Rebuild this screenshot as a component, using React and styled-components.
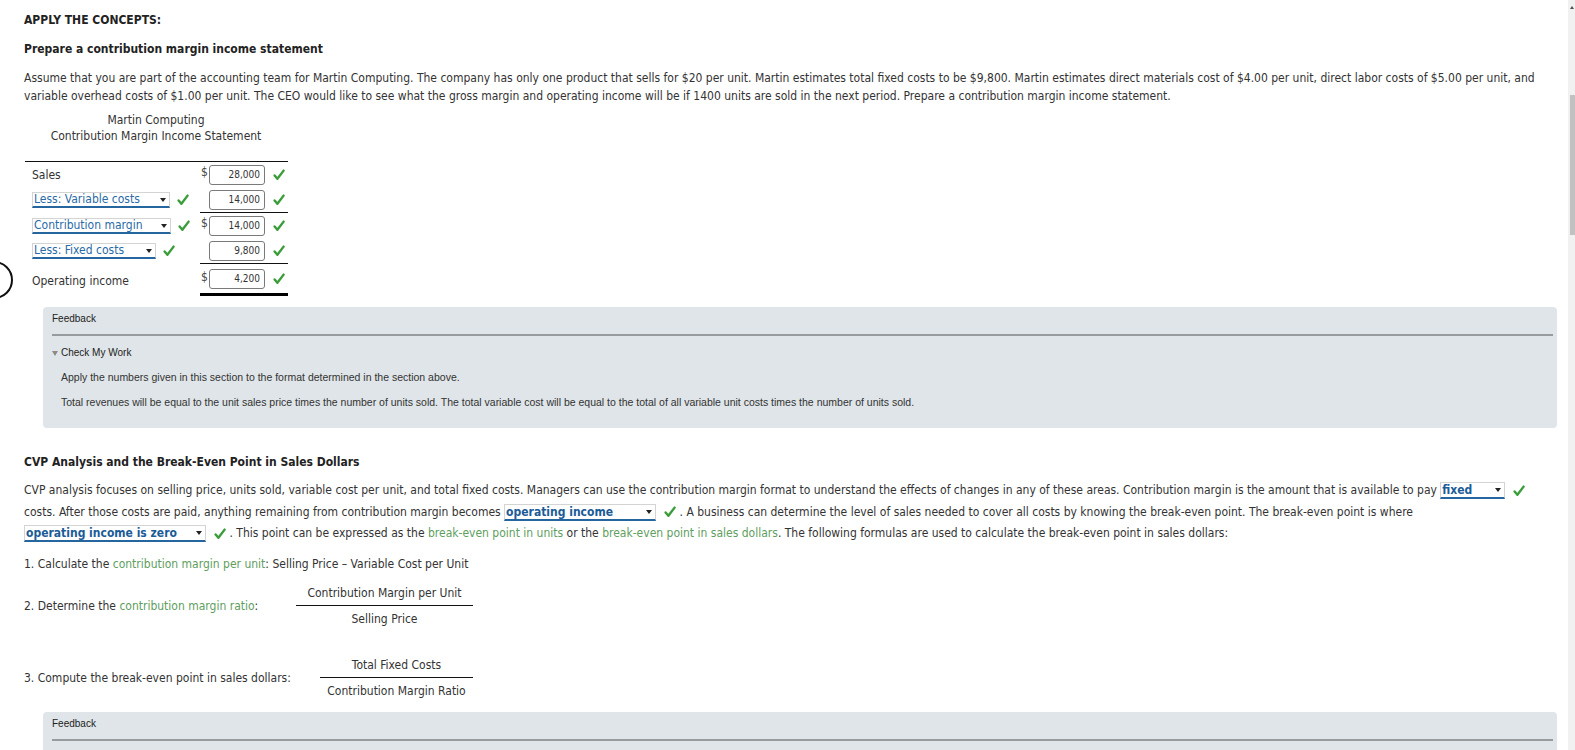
import React from 'react'
import styled, { createGlobalStyle } from 'styled-components'

const GlobalStyle = createGlobalStyle`
  html, body {
    margin: 0;
    padding: 0;
    overflow: hidden;
    background: #fff;
  }
  body {
    font-family: "DejaVu Sans Condensed", "DejaVu Sans", Verdana, sans-serif;
    font-size: 12px;
    color: #333;
  }
`

const Page = styled.div`
  position: relative;
  display: flex;
  height: 750px;
  overflow: hidden;
`

const Main = styled.div`
  flex: 1;
  padding: 11px 11px 0 24px;
  min-width: 0;
`

const Scrollbar = styled.div`
  width: 7px;
  background: #f1f1f1;
  display: flex;
  flex-direction: column;
  align-items: flex-end;
  padding-top: 6px;
`

const ScrollArrow = styled.div`
  width: 0;
  height: 0;
  border-left: 2px solid transparent;
  border-right: 2px solid transparent;
  border-bottom: 3px solid #505050;
  margin-right: 1px;
`

const ScrollThumb = styled.div`
  width: 5px;
  height: 140px;
  margin-top: 86px;
  background: #c1c1c1;
`

const Heading = styled.div`
  font-weight: bold;
  color: #222;
  line-height: 18px;
  margin-top: ${p => p.$mt || 0}px;
`

const Para = styled.p`
  margin: ${p => p.$mt || 0}px 0 0;
  line-height: ${p => p.$lh || 18}px;
  white-space: nowrap;
`

const Term = styled.span`
  color: #5e9e5e;
`

const StatementTitle = styled.div`
  width: 264px;
  margin-top: 7px;
  text-align: center;
  line-height: 16px;
  color: #333;
`

const Table = styled.div`
  width: 263px;
  margin: 17px 0 0 1px;
  border-top: 1px solid #111;
`

const Row = styled.div`
  display: flex;
  align-items: center;
  height: ${p => p.$h || 25}px;
`

const Label = styled.div`
  width: 168px;
  padding-left: 7px;
  display: flex;
  align-items: center;
  padding-top: ${p => p.$pt || 0}px;
`

const AmountCell = styled.div`
  width: 88px;
  align-self: stretch;
  display: flex;
  align-items: center;
  border-bottom: ${p => (p.$rule === 'double' ? '3px solid #000' : p.$rule ? '1px solid #111' : 'none')};
`

const Dollar = styled.span`
  width: 8px;
  font-size: 12px;
  line-height: 14px;
  color: #444;
  align-self: flex-start;
  margin-top: ${p => p.$mt || 3}px;
  padding-left: 1px;
`

const Amount = styled.div`
  box-sizing: border-box;
  width: 56px;
  height: 20px;
  border: 1px solid #7a7a7a;
  border-radius: 3px;
  font-size: 10px;
  line-height: 18px;
  text-align: right;
  padding-right: 4px;
  color: #333;
`

const CheckWrap = styled.span`
  display: inline-flex;
  align-items: center;
  margin-left: ${p => p.$ml || 8}px;
  vertical-align: middle;
`

const Select = styled.span`
  box-sizing: border-box;
  position: relative;
  display: inline-block;
  width: ${p => p.$w}px;
  height: ${p => p.$h || 16}px;
  line-height: ${p => (p.$h || 16) - 3}px;
  border: 1px solid #d4d4d4;
  border-bottom: 2px solid #25669f;
  color: ${p => (p.$bold ? '#1b5c97' : '#2a6aa6')};
  font-weight: ${p => (p.$bold ? 'bold' : 'normal')};
  padding-left: 1px;
  vertical-align: middle;
  white-space: nowrap;
  &::after {
    content: '';
    position: absolute;
    right: 3px;
    top: 5px;
    border-left: 3px solid transparent;
    border-right: 3px solid transparent;
    border-top: 4px solid #222;
  }
`

const Feedback = styled.div`
  margin: ${p => p.$mt || 0}px 0 0 19px;
  background: #dfe5e8;
  border-radius: 4px;
  padding: 5px 4px 0 9px;
  height: ${p => p.$h}px;
  font-family: "Liberation Sans", Arial, sans-serif;
  color: #222;
`

const FeedbackTitle = styled.div`
  font-size: 10px;
  line-height: 14px;
  padding-bottom: 8px;
  border-bottom: 2px solid #979b9e;
`

const CheckWork = styled.div`
  margin-top: 10px;
  font-size: 10px;
  line-height: 14px;
  display: flex;
  align-items: center;
  gap: 3px;
  &::before {
    content: '';
    border-left: 3px solid transparent;
    border-right: 3px solid transparent;
    border-top: 5px solid #8a8a8a;
  }
`

const FeedbackText = styled.p`
  margin: ${p => p.$mt}px 0 0 9px;
  font-size: 10.5px;
  line-height: 14px;
  color: #333;
`

const Step = styled.div`
  display: flex;
  align-items: center;
  justify-content: space-between;
  width: 449px;
  margin-top: ${p => p.$mt || 0}px;
`

const Fraction = styled.div`
  width: ${p => p.$w}px;
  display: flex;
  flex-direction: column;
  align-items: center;
  line-height: 14px;
  color: #333;
  span:first-child {
    width: 100%;
    text-align: center;
    padding-bottom: 5px;
    border-bottom: 1px solid #111;
  }
  span:last-child {
    padding-top: 6px;
  }
`

const Cursor = styled.div`
  position: absolute;
  left: -25px;
  top: 261px;
  width: 34px;
  height: 34px;
  border: 2px solid #111;
  border-radius: 50%;
`

const Check = ({ ml }) => (
  <CheckWrap $ml={ml}>
    <svg width="12" height="12" viewBox="0 0 12 12">
      <path d="M1.6 6.4 L4.4 9.8 L10.6 1.6" fill="none" stroke="#3a9d3a" strokeWidth="2.4" strokeLinecap="round" strokeLinejoin="round" />
    </svg>
  </CheckWrap>
)

const rows = [
  { label: 'Sales', amount: '28,000', dollar: true, h: 25 },
  { label: 'Less: Variable costs', select: 138, amount: '14,000', rule: true, h: 26 },
  { label: 'Contribution margin', select: 139, amount: '14,000', dollar: true, h: 25 },
  { label: 'Less: Fixed costs', select: 124, amount: '9,800', rule: true, h: 26 },
  { label: 'Operating income', amount: '4,200', dollar: true, rule: 'double', h: 32, last: true },
]

export default function App() {
  return (
    <Page>
      <GlobalStyle />
      <Cursor />
      <Main>
        <Heading>APPLY THE CONCEPTS:</Heading>
        <Heading $mt={11}>Prepare a contribution margin income statement</Heading>
        <Para $mt={11}>
          Assume that you are part of the accounting team for Martin Computing. The company has only one product that sells for $20 per unit. Martin estimates total fixed costs to be $9,800. Martin estimates direct materials cost of $4.00 per unit, direct labor costs of $5.00 per unit, and
          <br />
          variable overhead costs of $1.00 per unit. The CEO would like to see what the gross margin and operating income will be if 1400 units are sold in the next period. Prepare a contribution margin income statement.
        </Para>
        <StatementTitle>
          Martin Computing
          <br />
          Contribution Margin Income Statement
        </StatementTitle>

        <Table>
          {rows.map(r => (
            <Row key={r.label} $h={r.h}>
              <Label $pt={r.last ? 2 : 0}>
                {r.select ? (
                  <>
                    <Select $w={r.select}>{r.label}</Select>
                    <Check ml={7} />
                  </>
                ) : (
                  r.label
                )}
              </Label>
              <AmountCell $rule={r.rule}>
                <Dollar $mt={r.last ? 6 : 3}>{r.dollar ? '$' : ''}</Dollar>
                <Amount>{r.amount}</Amount>
                <Check ml={8} />
              </AmountCell>
            </Row>
          ))}
        </Table>

        <Feedback $mt={11} $h={116}>
          <FeedbackTitle>Feedback</FeedbackTitle>
          <CheckWork>Check My Work</CheckWork>
          <FeedbackText $mt={10}>Apply the numbers given in this section to the format determined in the section above.</FeedbackText>
          <FeedbackText $mt={11}>
            Total revenues will be equal to the unit sales price times the number of units sold. The total variable cost will be equal to the total of all variable unit costs times the number of units sold.
          </FeedbackText>
        </Feedback>

        <Heading $mt={25}>CVP Analysis and the Break-Even Point in Sales Dollars</Heading>
        <Para $mt={9} $lh={21.5}>
          CVP analysis focuses on selling price, units sold, variable cost per unit, and total fixed costs. Managers can use the contribution margin format to understand the effects of changes in any of these areas. Contribution margin is the amount that is available to pay{' '}
          <Select $w={65} $h={17} $bold>fixed</Select>
          <Check ml={8} />
          <br />
          costs. After those costs are paid, anything remaining from contribution margin becomes{' '}
          <Select $w={152} $h={17} $bold>operating income</Select>
          <Check ml={8} /> . A business can determine the level of sales needed to cover all costs by knowing the break-even point. The break-even point is where
          <br />
          <Select $w={182} $h={17} $bold>operating income is zero</Select>
          <Check ml={8} /> . This point can be expressed as the <Term>break-even point in units</Term> or the <Term>break-even point in sales dollars</Term>. The following formulas are used to calculate the break-even point in sales dollars:
        </Para>

        <Para $mt={10}>
          1. Calculate the <Term>contribution margin per unit</Term>: Selling Price – Variable Cost per Unit
        </Para>
        <Step $mt={13}>
          <span>2. Determine the <Term>contribution margin ratio</Term>:</span>
          <Fraction $w={177}>
            <span>Contribution Margin per Unit</span>
            <span>Selling Price</span>
          </Fraction>
        </Step>
        <Step $mt={32}>
          <span>3. Compute the break-even point in sales dollars:</span>
          <Fraction $w={153}>
            <span>Total Fixed Costs</span>
            <span>Contribution Margin Ratio</span>
          </Fraction>
        </Step>

        <Feedback $mt={14} $h={60}>
          <FeedbackTitle>Feedback</FeedbackTitle>
        </Feedback>
      </Main>
      <Scrollbar>
        <ScrollArrow />
        <ScrollThumb />
      </Scrollbar>
    </Page>
  )
}
